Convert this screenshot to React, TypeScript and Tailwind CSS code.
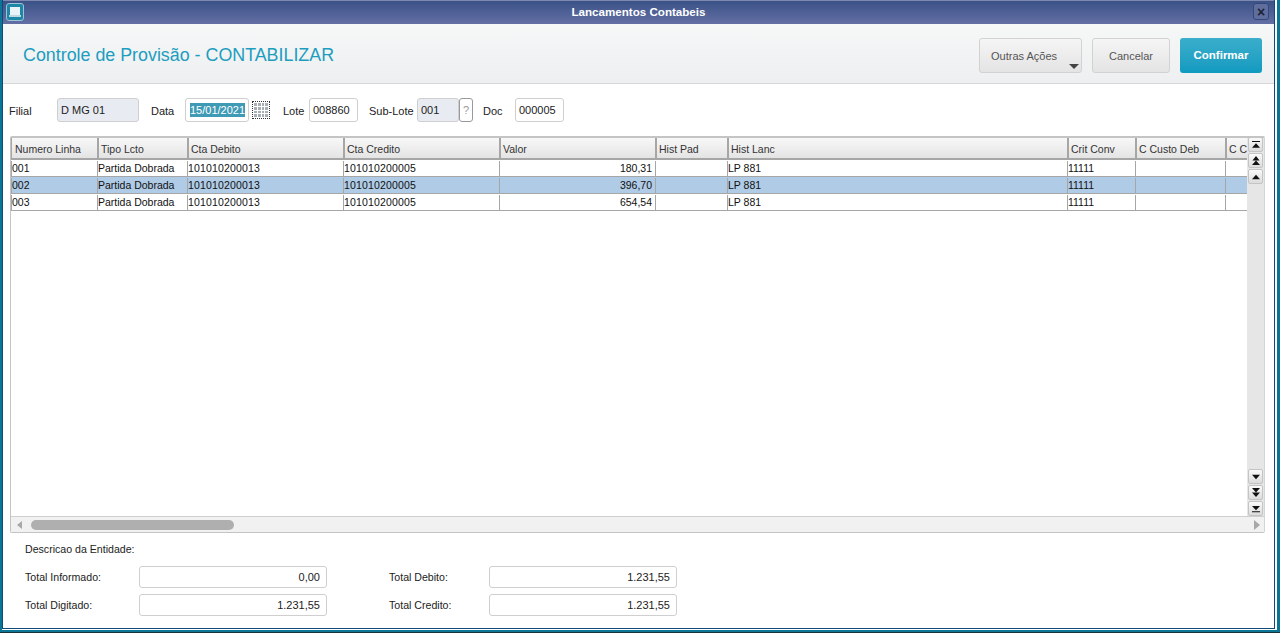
import React from 'react';

const columns = [
  { label: 'Numero Linha', width: 'w-[86px]' },
  { label: 'Tipo Lcto', width: 'w-[90px]' },
  { label: 'Cta Debito', width: 'w-[156px]' },
  { label: 'Cta Credito', width: 'w-[156px]' },
  { label: 'Valor', width: 'w-[156px]' },
  { label: 'Hist Pad', width: 'w-[72px]' },
  { label: 'Hist Lanc', width: 'w-[340px]' },
  { label: 'Crit Conv', width: 'w-[68px]' },
  { label: 'C Custo Deb', width: 'w-[90px]' },
  { label: 'C C', width: 'w-[22px]' },
];

const rows = [
  { id: '001', valor: '180,31' },
  { id: '002', valor: '396,70', selected: true },
  { id: '003', valor: '654,54' },
];

const Field: React.FC<{ value: string; width: string; gray?: boolean }> = ({ value, width, gray }) => (
  <div
    className={`h-6 ${width} flex items-center pl-[3px] rounded-[3px] border border-[#cfcfcf] text-[11px] text-[#222] ${
      gray ? 'bg-[#e8ebf1]' : 'bg-white'
    }`}
  >
    {value}
  </div>
);

const ScrollBtn: React.FC<{ kind: 'top' | 'up2' | 'up' | 'down' | 'down2' | 'bottom' }> = ({ kind }) => (
  <div className="h-[15px] w-[15px] mx-auto rounded-[2px] border border-[#c4c4c4] bg-gradient-to-b from-[#fafafa] to-[#dcdcdc] flex items-center justify-center">
    <svg width="8" height="10" viewBox="0 0 9 11" fill="#111">
      {kind === 'top' && <path d="M0 1h9v1.2H0zM4.5 3.5 9 8.5H0z" />}
      {kind === 'up2' && <path d="M4.5 0 8.5 5H.5zM4.5 5 9 10H0z" />}
      {kind === 'up' && <path d="M4.5 3 9 8H0z" />}
      {kind === 'down' && <path d="M0 3h9L4.5 8z" />}
      {kind === 'down2' && <path d="M0 0h9L4.5 5zM0 5h9l-4.5 5z" />}
      {kind === 'bottom' && <path d="M0 2h9L4.5 7zM0 8h9v1.2H0z" />}
    </svg>
  </div>
);

const Total: React.FC<{ label: string; value: string; labelWidth: string }> = ({ label, value, labelWidth }) => (
  <div className="flex items-center">
    <span className={`${labelWidth} mt-[2px] text-[10.6px] text-[#222]`}>{label}</span>
    <div className="w-[188px] h-[22px] rounded-[3px] border border-[#cfcfcf] bg-white flex items-center justify-end pr-[6px] text-[11px] text-[#222]">
      {value}
    </div>
  </div>
);

export default function App() {
  return (
    <div className="h-[633px] w-[1280px] overflow-hidden bg-[#0a7595] pl-[2px] pr-[3px] pb-[2px] border-b border-[#16323f] font-['Liberation_Sans',Arial,sans-serif]">
      <div className="h-full bg-white pr-[2px] pb-[1px]">
        <div className="h-full flex flex-col bg-white border-l border-r border-b border-[#0f4a78]">
          {/* title bar */}
          <div className="h-6 shrink-0 relative flex items-center justify-center pb-[2px] bg-gradient-to-b from-[#3b5287] to-[#636fa5] text-white text-[11.6px] font-bold border-t border-[#7d89b0]">
            <div className="absolute left-[3px] top-[2px] h-[18px] w-[18px] rounded-[3px] border border-[#9cc4d6] bg-[#1d87a8] flex items-center justify-center">
              <svg width="12" height="11" viewBox="0 0 12 11">
                <rect x="1" y="0" width="10" height="8" fill="#e9f3f7" />
                <rect x="0" y="8" width="12" height="2" fill="#bcd8e3" />
              </svg>
            </div>
            Lancamentos Contabeis
            <div className="absolute right-[5px] top-[2px] h-[17px] w-[16px] rounded-[3px] border border-[#34477a] bg-[#5f6e9c] flex items-center justify-center text-[#1a2338] text-[14px] font-bold leading-none">
              ×
            </div>
          </div>

          {/* header */}
          <div className="h-[60px] shrink-0 flex items-center justify-between pl-[20px] pr-[12px] pt-[3px] bg-gradient-to-b from-[#f6f8f8] to-[#eeeff0] border-b border-[#d8d8d8]">
            <h1 className="text-[17.85px] text-[#1d9dc0] font-normal">Controle de Provisão - CONTABILIZAR</h1>
            <div className="flex items-center gap-[10px]">
              <div className="relative w-[103px] h-[35px] rounded-[3px] border border-[#d2d2d2] bg-gradient-to-b from-[#f5f5f5] to-[#e4e4e4] flex items-center pl-[11px] pt-[2px] text-[11px] text-[#555]">
                Outras Ações
                <span className="absolute right-[2px] bottom-[3px] border-x-[5px] border-t-[5px] border-x-transparent border-t-[#444]" />
              </div>
              <div className="w-[78px] h-[35px] rounded-[3px] border border-[#d2d2d2] bg-gradient-to-b from-[#f5f5f5] to-[#e4e4e4] flex items-center justify-center pt-[2px] text-[11px] text-[#555]">
                Cancelar
              </div>
              <div className="w-[82px] h-[35px] rounded-[3px] bg-gradient-to-b from-[#3aaecb] to-[#0f9ac0] flex items-center justify-center pt-[2px] text-[11.5px] font-bold text-white">
                Confirmar
              </div>
            </div>
          </div>

          {/* filter row */}
          <div className="h-[52px] shrink-0 flex items-center pl-[6px] text-[11px] text-[#222]">
            <span className="w-[48px] mt-[2px]">Filial</span>
            <Field value="D MG 01" width="w-[82px]" gray />
            <span className="ml-[12px] w-[34px] mt-[2px]">Data</span>
            <div className="h-6 w-[64px] flex items-center pl-[4px] pb-[1px] rounded-[3px] border border-[#cfcfcf] bg-white">
              <span className="bg-[#3f9ab5] text-white leading-[14px]">15/01/2021</span>
            </div>
            <div className="ml-[3px] mr-[13px] h-[18px] w-[18px] border border-dotted border-[#333] grid grid-cols-4 gap-[1px] p-[1px] bg-white">
              {Array.from({ length: 16 }).map((_, i) => (
                <span key={i} className="bg-[#a9adb5]" />
              ))}
            </div>
            <span className="w-[26px] mt-[2px]">Lote</span>
            <Field value="008860" width="w-[49px]" />
            <span className="ml-[11px] w-[48px] mt-[2px]">Sub-Lote</span>
            <Field value="001" width="w-[42px]" gray />
            <div className="h-6 w-[14px] rounded-[3px] border border-[#999] bg-white flex items-center justify-center text-[11px] text-[#999]">
              ?
            </div>
            <span className="ml-[10px] w-[32px] mt-[2px]">Doc</span>
            <Field value="000005" width="w-[49px]" />
          </div>

          {/* grid */}
          <div className="h-[397px] shrink-0 ml-[7px] mr-[9px] flex flex-col rounded-[2px] border border-t-2 border-[#c4c4c4] border-r-[#d4d4d4] bg-white">
            <div className="flex-1 flex min-h-0">
              <div className="flex-1 min-w-0 overflow-hidden">
                <div className="flex h-[22px] w-max">
                  {columns.map((c) => (
                    <div
                      key={c.label}
                      className={`${c.width} shrink-0 overflow-hidden whitespace-nowrap flex items-center pl-[2px] first:pl-[3px] pt-[3px] text-[10.5px] text-[#333] bg-gradient-to-b from-[#f8f8f8] to-[#e4e4e4] border-l-2 border-b-2 border-[#a6a6a6] first:border-l`}
                    >
                      {c.label}
                    </div>
                  ))}
                </div>
                {rows.map((r) => (
                  <div
                    key={r.id}
                    className={`flex h-[17px] w-max border-b border-[#a6a6a6] pt-[1px] text-[10.5px] text-[#111] ${
                      r.selected ? 'bg-[#b0cbe6]' : 'bg-white'
                    }`}
                  >
                    <div className="w-[86px] shrink-0 border-l border-[#a6a6a6]">{r.id}</div>
                    <div className="w-[90px] shrink-0 border-l border-[#a6a6a6]">Partida Dobrada</div>
                    <div className="w-[156px] shrink-0 border-l border-[#a6a6a6] tracking-[0.15px]">101010200013</div>
                    <div className="w-[156px] shrink-0 border-l border-[#a6a6a6] tracking-[0.15px]">101010200005</div>
                    <div className="w-[156px] pr-[3px] shrink-0 border-l border-[#a6a6a6] text-right">{r.valor}</div>
                    <div className="w-[72px] shrink-0 border-l border-[#a6a6a6]" />
                    <div className="w-[340px] shrink-0 border-l border-[#a6a6a6]">LP 881</div>
                    <div className="w-[68px] shrink-0 border-l border-[#a6a6a6]">11111</div>
                    <div className="w-[90px] shrink-0 border-l border-[#a6a6a6]" />
                    <div className="w-[22px] shrink-0 border-l border-[#a6a6a6]" />
                  </div>
                ))}
              </div>
              <div className="w-[17px] shrink-0 bg-[#e6e6e6] flex flex-col justify-between">
                <div className="flex flex-col gap-px -mt-px">
                  <ScrollBtn kind="top" />
                  <ScrollBtn kind="up2" />
                  <ScrollBtn kind="up" />
                </div>
                <div className="flex flex-col gap-px">
                  <ScrollBtn kind="down" />
                  <ScrollBtn kind="down2" />
                  <ScrollBtn kind="bottom" />
                </div>
              </div>
            </div>
            <div className="h-[16px] shrink-0 flex items-center bg-[#f1f1f1] border-t border-[#cfcfcf] pl-[6px] pr-[4px]">
              <span className="border-y-[4px] border-r-[5px] border-y-transparent border-r-[#a8a8a8]" />
              <div className="ml-[9px] h-[10px] w-[203px] rounded-[5px] bg-[#afafaf]" />
              <span className="ml-auto border-y-[5px] border-l-[6px] border-y-transparent border-l-[#a8a8a8]" />
            </div>
          </div>

          {/* footer */}
          <div className="flex-1 pl-[22px] pt-[10px] flex flex-col">
            <span className="text-[10.6px] text-[#222] leading-[12px]">Descricao da Entidade:</span>
            <div className="mt-[11px] grid grid-cols-[364px_auto] w-max gap-y-[6px]">
              <Total label="Total Informado:" value="0,00" labelWidth="w-[114px]" />
              <Total label="Total Debito:" value="1.231,55" labelWidth="w-[100px]" />
              <Total label="Total Digitado:" value="1.231,55" labelWidth="w-[114px]" />
              <Total label="Total Credito:" value="1.231,55" labelWidth="w-[100px]" />
            </div>
          </div>
        </div>
      </div>
    </div>
  );
}
